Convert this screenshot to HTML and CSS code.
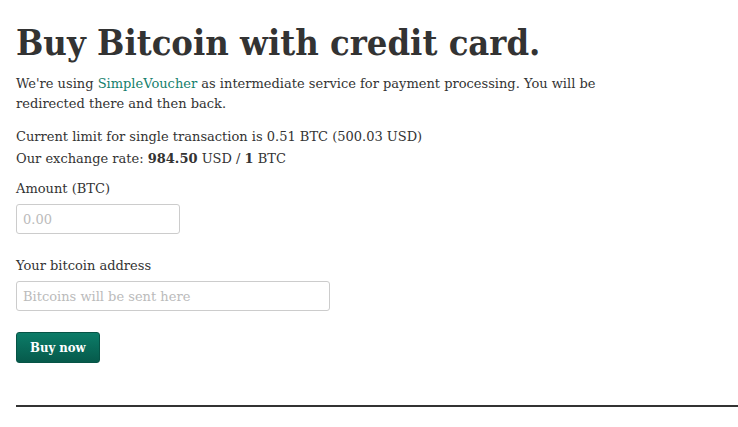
FILE: index.html
```html
<!DOCTYPE html>
<html lang="en">
<head>
    <meta charset="UTF-8">
    <title>Buy Bitcoin with credit card</title>
    <link rel="stylesheet" href="styles.css">
</head>
<body>
    <div class="container">
        <h1>Buy Bitcoin with credit card.</h1>
        <p class="intro">We're using <a href="#">SimpleVoucher</a> as intermediate service for payment processing. You will be redirected there and then back.</p>
        <p class="limits">
            Current limit for single transaction is 0.51 BTC (500.03 USD)<br>
            Our exchange rate: <b>984.50</b> USD / <b>1</b> BTC
        </p>
        <form class="buy-form">
            <label for="amount">Amount (BTC)</label>
            <input type="text" id="amount" class="input-small" placeholder="0.00">

            <label for="address">Your bitcoin address</label>
            <input type="text" id="address" class="input-large" placeholder="Bitcoins will be sent here">

            <button type="button">Buy now</button>
        </form>
        <hr>
    </div>
</body>
</html>
```

FILE: styles.css
```css
body {
    margin: 0;
    font-family: "DejaVu Serif", Georgia, serif;
    font-size: 13px;
    color: #333;
}
.container {
    padding: 0 0 0 16px;
}
h1 {
    font-size: 36px;
    font-stretch: condensed;
    font-weight: bold;
    margin: 20px 0 10px;
    line-height: 44px;
}
p {
    margin: 0 0 12px;
    line-height: 20px;
    max-width: 600px;
}
a {
    color: #14806c;
    text-decoration: none;
}
.limits {
    line-height: 22px;
    margin-bottom: 9px;
}
label {
    display: block;
    margin-top: 4px;
    line-height: 20px;
}
input {
    display: block;
    box-sizing: border-box;
    height: 30px;
    padding: 4px 6px;
    margin: 5px 0 22px;
    border: 1px solid #ccc;
    border-radius: 3px;
    font-family: inherit;
    font-size: 13px;
}
input::placeholder {
    color: #bbb;
}
.input-small {
    width: 164px;
}
.input-large {
    width: 314px;
    margin-bottom: 21px;
}
button {
    display: block;
    height: 31px;
    padding: 0 13px;
    border: 1px solid #065446;
    border-radius: 3px;
    background: linear-gradient(#0c7c68, #065a4b);
    color: #fff;
    font-family: inherit;
    font-stretch: condensed;
    font-weight: bold;
    font-size: 13px;
    margin-top: 0;
}
hr {
    margin: 42px 0 0;
    border: 0;
    border-top: 2px solid #333;
}
```
